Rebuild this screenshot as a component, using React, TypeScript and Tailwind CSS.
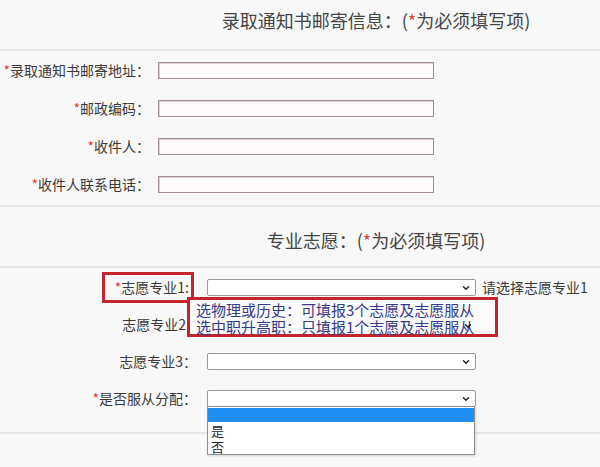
import { ChevronDown } from 'lucide-react'

const font = {
  fontFamily: '"Noto Sans CJK SC", "Noto Sans", "Liberation Sans", sans-serif',
}

function Star() {
  return <span className="text-[#e23b3b]">*</span>
}

function TextRow({ label }: { label: string }) {
  return (
    <div className="flex h-[38px] items-center">
      <div className="w-[150px] text-right text-[14px] text-[#3a3a3a] whitespace-nowrap">
        <Star />
        {label}：
      </div>
      <div className="ml-[8px] h-[17px] w-[276px] border border-[#a58f8f] bg-[#fdfbfb] shadow-[inset_1px_1px_0_#d8cfcf]" />
    </div>
  )
}

function FakeSelect() {
  return (
    <div className="flex h-[17px] w-[269px] items-center justify-end rounded-[2px] border border-[#9a9a9a] bg-white pr-[4px]">
      <ChevronDown size={10} strokeWidth={3.5} className="text-[#222]" />
    </div>
  )
}

export default function App() {
  return (
    <div className="h-[467px] w-[600px] overflow-hidden bg-[#f8f8f8]" style={font}>
      {/* 录取通知书 */}
      <div className="flex h-[49px] justify-center pl-[152px] pt-[8px] text-[18px] leading-[24px] text-[#444]">
        录取通知书邮寄信息：(<Star />为必须填写项)
      </div>
      <div className="border-t-2 border-[#e6e6e6]" />
      <div className="pb-[2px]">
        <TextRow label="录取通知书邮寄地址" />
        <TextRow label="邮政编码" />
        <TextRow label="收件人" />
        <TextRow label="收件人联系电话" />
      </div>
      <div className="border-t-2 border-[#e6e6e6]" />

      {/* 专业志愿 */}
      <div className="flex h-[59px] justify-center pl-[152px] pt-[21px] text-[18px] leading-[24px] text-[#444]">
        专业志愿：(<Star />为必须填写项)
      </div>
      <div className="border-t-2 border-[#e6e6e6]" />

      <div className="relative pb-[15px] pt-px text-[14px] text-[#3a3a3a]">
        <div className="flex h-[37px] items-center">
          <div className="flex w-[197px] justify-end">
            <div className="mr-[3px] border-[3px] border-[#c4252c] py-[2px] pl-[10px] pr-[2px] whitespace-nowrap">
              <Star />
              志愿专业1:
            </div>
          </div>
          <div className="ml-[10px]">
            <FakeSelect />
          </div>
          <span className="ml-[6px] whitespace-nowrap">请选择志愿专业1</span>
        </div>

        <div className="flex h-[37px] items-center">
          <div className="w-[187px] pr-px text-right whitespace-nowrap">志愿专业2</div>
        </div>

        <div className="flex h-[37px] items-center">
          <div className="w-[197px] text-right whitespace-nowrap">志愿专业3：</div>
          <div className="ml-[10px]">
            <FakeSelect />
          </div>
        </div>

        <div className="flex h-[37px] items-center">
          <div className="w-[197px] text-right whitespace-nowrap">
            <Star />
            是否服从分配：
          </div>
          <div className="relative ml-[10px]">
            <FakeSelect />
            {/* open dropdown */}
            <div className="absolute left-0 top-[16px] z-10 h-[49px] w-[268px] border border-[#8f8f8f] bg-white text-[13px] leading-[16px] text-[#222] shadow-[1px_1px_2px_rgba(0,0,0,0.15)]">
              <div className="mt-px h-[14px] bg-[#1e8ef5]" />
              <div className="pl-[3px] pt-[1px]">是</div>
              <div className="pl-[3px]">否</div>
            </div>
          </div>
        </div>

        {/* annotation box */}
        <div className="absolute left-[187px] top-[29px] h-[40px] w-[311px] border-[3px] border-[#c4252c] bg-[#fbfbfb] pl-[6px] pt-px text-[15px] leading-[17px] text-[#34398a] whitespace-nowrap">
          <div>选物理或历史：可填报3个志愿及志愿服从</div>
          <div>选中职升高职：只填报1个志愿及志愿服从</div>
          <ChevronDown size={10} strokeWidth={3.5} className="absolute left-[273px] top-[21px] text-[#222]" />
        </div>
      </div>
      <div className="border-t-2 border-[#e6e6e6]" />
    </div>
  )
}
